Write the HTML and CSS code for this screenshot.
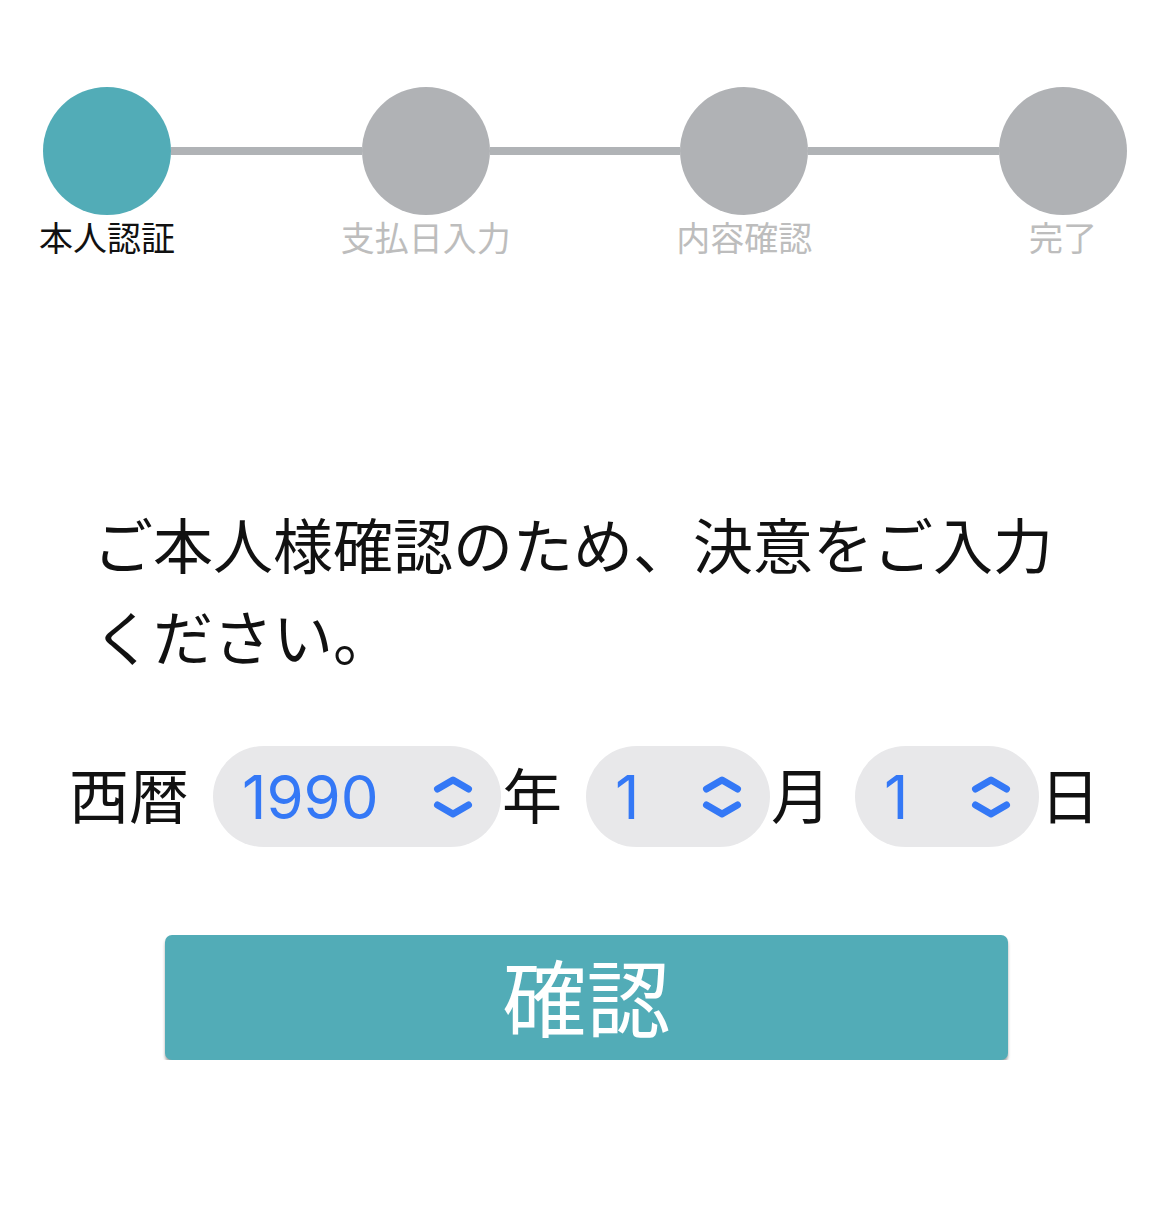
FILE: index.html
```html
<!DOCTYPE html>
<html lang="ja">
<head>
  <meta charset="UTF-8">
  <title>本人認証</title>
  <link rel="stylesheet" href="styles.css">
</head>
<body>
  <ol class="steps">
    <li class="step active">
      <span class="step-dot"></span>
      <span class="step-label">本人認証</span>
    </li>
    <li class="step-line"></li>
    <li class="step">
      <span class="step-dot"></span>
      <span class="step-label">支払日入力</span>
    </li>
    <li class="step-line"></li>
    <li class="step">
      <span class="step-dot"></span>
      <span class="step-label">内容確認</span>
    </li>
    <li class="step-line"></li>
    <li class="step">
      <span class="step-dot"></span>
      <span class="step-label">完了</span>
    </li>
  </ol>

  <form class="verify">
    <p class="lead">ご本人様確認のため、決意をご入力ください。</p>

    <div class="date-row">
      <span class="era">西暦</span>
      <label class="pill pill-year">
        <select class="pill-select" id="year">
          <option>1990</option>
        </select>
        <svg class="chevron" viewBox="0 0 40 44" width="40" height="44">
          <path d="M4.5 14 L20 5 L35.5 14 M4.5 30 L20 39 L35.5 30" />
        </svg>
      </label>
      <span class="unit">年</span>
      <label class="pill">
        <select class="pill-select" id="month">
          <option>1</option>
        </select>
        <svg class="chevron" viewBox="0 0 40 44" width="40" height="44">
          <path d="M4.5 14 L20 5 L35.5 14 M4.5 30 L20 39 L35.5 30" />
        </svg>
      </label>
      <span class="unit">月</span>
      <label class="pill">
        <select class="pill-select" id="day">
          <option>1</option>
        </select>
        <svg class="chevron" viewBox="0 0 40 44" width="40" height="44">
          <path d="M4.5 14 L20 5 L35.5 14 M4.5 30 L20 39 L35.5 30" />
        </svg>
      </label>
      <span class="unit last">日</span>
    </div>

    <button type="button" class="confirm">確認</button>
  </form>
</body>
</html>
```

FILE: styles.css
```css
body {
  margin: 0;
  background-color: #fff;
  color: #111;
  font-family: "Noto Sans CJK JP", "Noto Sans", sans-serif;
}
.steps {
  display: flex;
  list-style: none;
  margin: 0;
  padding: 87px 42px 0 43px;
}
.step {
  width: 128px;
  display: flex;
  flex-direction: column;
  align-items: center;
  flex-shrink: 0;
}
.step-dot {
  width: 128px;
  height: 128px;
  border-radius: 50%;
  background-color: #b0b2b5;
}
.step.active .step-dot {
  background-color: #52acb7;
}
.step-label {
  margin-top: 4px;
  white-space: nowrap;
  font-family: "Liberation Serif", "Noto Sans CJK JP", serif;
  font-size: 34px;
  line-height: 41px;
  color: #bdbdbd;
}
.step.active .step-label {
  color: #111;
}
.step-line {
  flex: 1;
  height: 8px;
  margin-top: 60px;
  background-color: #b0b3b6;
}
.verify {
  margin: 0;
  padding: 237px 0 0;
}
.lead {
  margin: 0;
  padding: 0 98px 0 93px;
  font-size: 60px;
  line-height: 92px;
  color: #111;
}
.date-row {
  display: flex;
  justify-content: center;
  align-items: center;
  margin-top: 65px;
  font-size: 60px;
  line-height: 1;
}
.era {
  margin: 0 24px 8px 0;
}
.unit {
  margin: 0 24px 8px 1px;
}
.unit.last {
  margin-right: 0;
}
.pill {
  display: flex;
  align-items: center;
  width: 184px;
  height: 101px;
  box-sizing: border-box;
  padding: 0 28px 0 29px;
  border-radius: 51px;
  background-color: #e8e8ea;
}
.pill-year {
  width: 288px;
}
.pill-select {
  flex: 1;
  min-width: 0;
  -webkit-appearance: none;
  appearance: none;
  border: none;
  background: transparent;
  padding: 0;
  margin: 0;
  font-family: Inter, "Noto Sans", sans-serif;
  font-size: 60px;
  color: #3478f6;
  outline: none;
}
.chevron {
  flex-shrink: 0;
  fill: none;
  stroke: #3478f6;
  stroke-width: 7;
  stroke-linecap: round;
  stroke-linejoin: round;
}
.confirm {
  display: block;
  width: 843px;
  height: 125px;
  margin: 88px 0 0 165px;
  padding: 0 0 6px;
  border: none;
  border-radius: 7px;
  background-color: #52acb7;
  box-shadow: 0 3px 3px rgba(0, 0, 0, 0.35);
  color: #fff;
  font-family: "Noto Sans CJK JP", sans-serif;
  font-size: 84px;
  line-height: 1;
  cursor: pointer;
}
```
